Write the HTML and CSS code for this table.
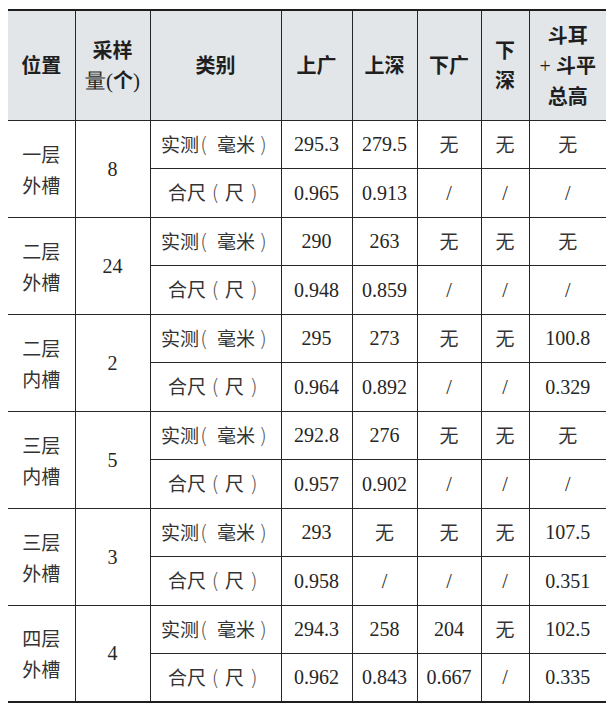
FILE: index.html
```html
<!DOCTYPE html>
<html lang="zh">
<head>
<meta charset="utf-8">
<link rel="stylesheet" href="styles.css">
</head>
<body>
<table class="data">
  <colgroup>
    <col class="c1"><col class="c2"><col class="c3"><col class="c4"><col class="c5"><col class="c6"><col class="c7"><col class="c8">
  </colgroup>
  <thead>
    <tr class="head">
      <th>位置</th>
      <th>采样<br><span class="num">量(</span>个<span class="num">)</span></th>
      <th>类别</th>
      <th>上广</th>
      <th>上深</th>
      <th>下广</th>
      <th>下<br>深</th>
      <th>斗耳<br><span class="plus">+</span>斗平<br>总高</th>
    </tr>
  </thead>
  <tbody>
    <tr class="r1"><td rowspan="2" class="pos">一层<br>外槽</td><td rowspan="2" class="num">8</td><td class="cat">实测<span class="lp">(</span>毫米<span class="rp">)</span></td><td class="num">295.3</td><td class="num">279.5</td><td>无</td><td>无</td><td>无</td></tr>
    <tr class="r2"><td class="cat">合尺<span class="cp">(</span>尺<span class="cp">)</span></td><td class="num">0.965</td><td class="num">0.913</td><td class="num">/</td><td class="num">/</td><td class="num">/</td></tr>

    <tr class="r1"><td rowspan="2" class="pos">二层<br>外槽</td><td rowspan="2" class="num">24</td><td class="cat">实测<span class="lp">(</span>毫米<span class="rp">)</span></td><td class="num">290</td><td class="num">263</td><td>无</td><td>无</td><td>无</td></tr>
    <tr class="r2"><td class="cat">合尺<span class="cp">(</span>尺<span class="cp">)</span></td><td class="num">0.948</td><td class="num">0.859</td><td class="num">/</td><td class="num">/</td><td class="num">/</td></tr>

    <tr class="r1"><td rowspan="2" class="pos">二层<br>内槽</td><td rowspan="2" class="num">2</td><td class="cat">实测<span class="lp">(</span>毫米<span class="rp">)</span></td><td class="num">295</td><td class="num">273</td><td>无</td><td>无</td><td class="num">100.8</td></tr>
    <tr class="r2"><td class="cat">合尺<span class="cp">(</span>尺<span class="cp">)</span></td><td class="num">0.964</td><td class="num">0.892</td><td class="num">/</td><td class="num">/</td><td class="num">0.329</td></tr>

    <tr class="r1"><td rowspan="2" class="pos">三层<br>内槽</td><td rowspan="2" class="num">5</td><td class="cat">实测<span class="lp">(</span>毫米<span class="rp">)</span></td><td class="num">292.8</td><td class="num">276</td><td>无</td><td>无</td><td>无</td></tr>
    <tr class="r2"><td class="cat">合尺<span class="cp">(</span>尺<span class="cp">)</span></td><td class="num">0.957</td><td class="num">0.902</td><td class="num">/</td><td class="num">/</td><td class="num">/</td></tr>

    <tr class="r1"><td rowspan="2" class="pos">三层<br>外槽</td><td rowspan="2" class="num">3</td><td class="cat">实测<span class="lp">(</span>毫米<span class="rp">)</span></td><td class="num">293</td><td>无</td><td>无</td><td>无</td><td class="num">107.5</td></tr>
    <tr class="r2"><td class="cat">合尺<span class="cp">(</span>尺<span class="cp">)</span></td><td class="num">0.958</td><td class="num">/</td><td class="num">/</td><td class="num">/</td><td class="num">0.351</td></tr>

    <tr class="r1"><td rowspan="2" class="pos">四层<br>外槽</td><td rowspan="2" class="num">4</td><td class="cat">实测<span class="lp">(</span>毫米<span class="rp">)</span></td><td class="num">294.3</td><td class="num">258</td><td class="num">204</td><td>无</td><td class="num">102.5</td></tr>
    <tr class="r2"><td class="cat">合尺<span class="cp">(</span>尺<span class="cp">)</span></td><td class="num">0.962</td><td class="num">0.843</td><td class="num">0.667</td><td class="num">/</td><td class="num">0.335</td></tr>
  </tbody>
</table>
</body>
</html>
```
FILE: styles.css
```css
html, body {
  margin: 0;
  padding: 0;
  background: #ffffff;
}
body {
  padding: 9px 8px 0 8px;
  font-family: "Liberation Serif", "Noto Sans CJK SC", serif;
  color: #2e2e2e;
}
.data {
  border-collapse: collapse;
  table-layout: fixed;
  width: 598px;
  border-top: 2px solid #1e1e1e;
  border-bottom: 2px solid #1e1e1e;
}
.c1 { width: 67px; }
.c2 { width: 75px; }
.c3 { width: 131px; }
.c4 { width: 71px; }
.c5 { width: 65px; }
.c6 { width: 64px; }
.c7 { width: 48px; }
.c8 { width: 77px; }

.data th, .data td {
  border: 1px solid #262626;
  padding: 0;
  text-align: center;
  vertical-align: middle;
}
.data th:first-child, .data td.pos { border-left: none; }
.data th:last-child, .data tr > td:last-child { border-right: none; }

.head {
  height: 110px;
  background: #e3e6e9;
}
.head th {
  font-family: "Noto Sans CJK SC", sans-serif;
  font-weight: 700;
  font-size: 20px;
  line-height: 30px;
  color: #1f1f1f;
}
.head .num {
  font-family: "Liberation Serif", serif;
  font-weight: 400;
  font-size: 21px;
}
.head .plus {
  font-family: "Liberation Serif", serif;
  font-weight: 400;
  margin-right: 5px;
}
.r1 { height: 48px; }
.r2 { height: 49px; }

.data td {
  font-family: "Noto Sans CJK SC", sans-serif;
  font-size: 19px;
  line-height: 30px;
  font-weight: 400;
  color: #333333;
}
.data td.num {
  font-family: "Liberation Serif", serif;
  font-size: 20px;
  color: #262626;
}
.data td.cat {
  font-size: 19px;
}
.data td.cat .lp,
.data td.cat .rp,
.data td.cat .cp {
  display: inline-block;
  font-family: "DejaVu Sans", sans-serif;
  font-weight: 200;
  font-size: 21px;
  color: #555555;
  box-sizing: border-box;
}
.data td.cat .lp {
  width: 18px;
  text-align: left;
  padding-left: 1px;
}
.data td.cat .rp {
  width: 15px;
  text-align: right;
  padding-right: 3px;
}
.data td.cat .cp {
  width: 19px;
  text-align: center;
}
.data td.pos {
  font-size: 19px;
  line-height: 31px;
}
```
